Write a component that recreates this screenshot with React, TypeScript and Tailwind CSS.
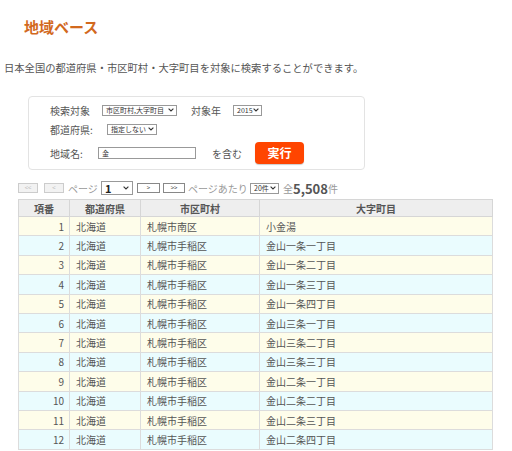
const rows: [number, string, string, string][] = [
  [1, '北海道', '札幌市南区', '小金湯'],
  [2, '北海道', '札幌市手稲区', '金山一条一丁目'],
  [3, '北海道', '札幌市手稲区', '金山一条二丁目'],
  [4, '北海道', '札幌市手稲区', '金山一条三丁目'],
  [5, '北海道', '札幌市手稲区', '金山一条四丁目'],
  [6, '北海道', '札幌市手稲区', '金山三条一丁目'],
  [7, '北海道', '札幌市手稲区', '金山三条二丁目'],
  [8, '北海道', '札幌市手稲区', '金山三条三丁目'],
  [9, '北海道', '札幌市手稲区', '金山二条一丁目'],
  [10, '北海道', '札幌市手稲区', '金山二条二丁目'],
  [11, '北海道', '札幌市手稲区', '金山二条三丁目'],
  [12, '北海道', '札幌市手稲区', '金山二条四丁目'],
];

function Chevron() {
  return (
    <svg width="6" height="4" viewBox="0 0 6 4" className="shrink-0">
      <path d="M0.6 0.6 L3 3 L5.4 0.6" fill="none" stroke="#333" strokeWidth="1.1" />
    </svg>
  );
}

function MiniSelect({ label, w }: { label: string; w: string }) {
  return (
    <div className={`${w} h-[11px] border border-[#999] bg-white flex items-center justify-between pl-[3px] pr-[2px]`}>
      <span className="text-[7px] leading-none text-[#333] whitespace-nowrap">{label}</span>
      <Chevron />
    </div>
  );
}

function PageBtn({ label, on }: { label: string; on?: boolean }) {
  return (
    <div
      className={`h-[10px] flex items-center justify-center text-[6px] leading-none border ${
        on ? 'border-[#888] bg-white text-[#333]' : 'border-[#ccc] bg-[#f2f2f2] text-[#bbb]'
      }`}
    >
      {label}
    </div>
  );
}

export default function App() {
  return (
    <div className="w-[512px] h-[451px] overflow-hidden bg-white text-[#555] font-['Noto_Sans_CJK_JP','Noto_Sans',sans-serif]">
      <h1 className="pl-[24px] pt-[17px] text-[15px] leading-[20px] font-bold text-[#d2691e]">地域ベース</h1>
      <p className="mt-[24px] pl-[4px] text-[10.3px] leading-[14px]">
        日本全国の都道府県・市区町村・大字町目を対象に検索することができます。
      </p>

      <div className="mt-[21px] ml-[28px] w-[337px] h-[74px] border border-[#e3e3e3] rounded-[4px] pl-[21px] pt-[6px] text-[10px]">
        <div className="flex items-center h-[14px]">
          <span className="w-[52px]">検索対象</span>
          <MiniSelect label="市区町村,大字町目" w="w-[75px]" />
          <span className="ml-[14px] w-[42px]">対象年</span>
          <MiniSelect label="2015" w="w-[29px]" />
        </div>
        <div className="flex items-center h-[14px] mt-[5px]">
          <span className="w-[57px]">都道府県:</span>
          <MiniSelect label="指定しない" w="w-[50px]" />
        </div>
        <div className="flex items-center h-[22px] mt-[6px]">
          <span className="w-[48px]">地域名:</span>
          <div className="w-[98px] h-[12px] border border-[#999] bg-white flex items-center pl-[3px]">
            <span className="text-[7px] leading-none text-[#333]">金</span>
          </div>
          <span className="ml-[16px] w-[43px]">を含む</span>
          <div className="w-[49px] h-[22px] rounded-[4px] bg-[#ff4500] text-white font-bold text-[12px] flex items-center justify-center shadow-[0_1px_1px_rgba(0,0,0,0.2)]">
            実行
          </div>
        </div>
      </div>

      <div className="mt-[10px] ml-[18px] flex items-center h-[16px] text-[10px] text-[#999]">
        <div className="w-[20px]"><PageBtn label="<<" /></div>
        <div className="w-[20px] ml-[6px]"><PageBtn label="<" /></div>
        <span className="ml-[4px] w-[33px]">ページ</span>
        <div className="w-[32px] h-[14px] border border-[#999] bg-white flex items-center justify-between pl-[3px] pr-[3px]">
          <span className="text-[11px] font-bold leading-none text-[#222]">1</span>
          <Chevron />
        </div>
        <div className="w-[23px] ml-[4px]"><PageBtn label=">" on /></div>
        <div className="w-[22px] ml-[3px]"><PageBtn label=">>" on /></div>
        <span className="ml-[3px] w-[62px] whitespace-nowrap">ページあたり</span>
        <MiniSelect label="20件" w="w-[29px]" />
        <span className="ml-[4px]">全</span>
        <span className="text-[13px] font-bold text-[#555] leading-none">5,508</span>
        <span>件</span>
      </div>

      <table className="mt-[3px] ml-[18px] w-[475px] border-collapse border-x border-[#cfcfcf] text-[10px] table-fixed">
        <colgroup>
          <col className="w-[51px]" />
          <col className="w-[71px]" />
          <col className="w-[119px]" />
          <col />
        </colgroup>
        <thead>
          <tr className="h-[17px] bg-[#eeeeee]">
            <th className="border border-[#d6d6d6] font-bold text-center">項番</th>
            <th className="border border-[#d6d6d6] font-bold text-center">都道府県</th>
            <th className="border border-[#d6d6d6] font-bold text-center">市区町村</th>
            <th className="border border-[#d6d6d6] font-bold text-center">大字町目</th>
          </tr>
        </thead>
        <tbody>
          {rows.map(([n, p, c, t]) => (
            <tr key={n} className={`h-[19.4px] ${n % 2 === 1 ? 'bg-[#fefdea]' : 'bg-[#eafcfe]'}`}>
              <td className="border border-[#dcdcdc] text-right pr-[5px]">{n}</td>
              <td className="border border-[#dcdcdc] pl-[6px]">{p}</td>
              <td className="border border-[#dcdcdc] pl-[6px]">{c}</td>
              <td className="border border-[#dcdcdc] pl-[6px]">{t}</td>
            </tr>
          ))}
        </tbody>
      </table>
    </div>
  );
}
